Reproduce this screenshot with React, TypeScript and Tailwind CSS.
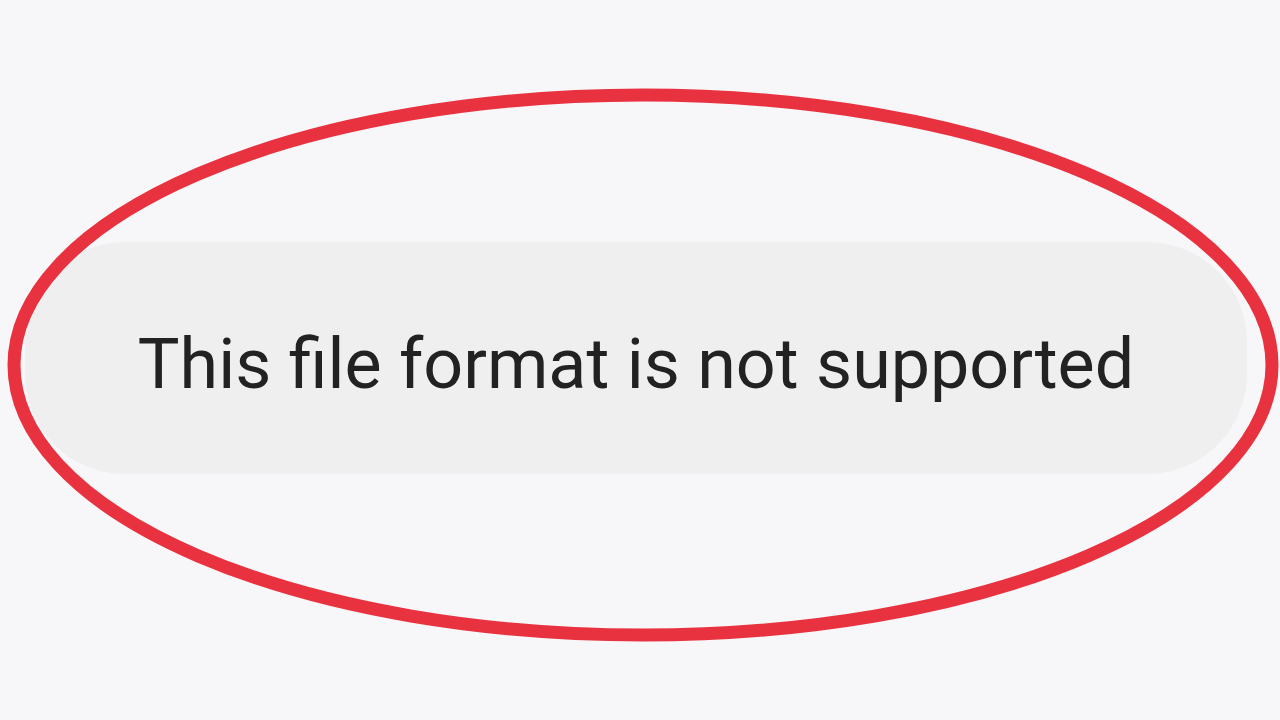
import React from "react";

export default function App() {
  return (
    <div className="relative h-[720px] w-[1280px] overflow-hidden bg-[#f7f7f9]">
      <div className="pl-[25px] pt-[242px]">
        <div className="flex h-[232px] w-[1222px] items-center justify-center rounded-[100px] bg-[#efeff0]">
          <span
            className="mt-[11px] text-[70px] leading-none text-[#222222]"
            style={{ fontFamily: "Roboto, 'Noto Sans', sans-serif" }}
          >
            This file format is not supported
          </span>
        </div>
      </div>
      <svg className="pointer-events-none absolute inset-0" width="1280" height="720" viewBox="0 0 1280 720">
        <ellipse cx="643" cy="365" rx="629" ry="270" fill="none" stroke="#e8323f" strokeWidth="13" />
      </svg>
    </div>
  );
}
